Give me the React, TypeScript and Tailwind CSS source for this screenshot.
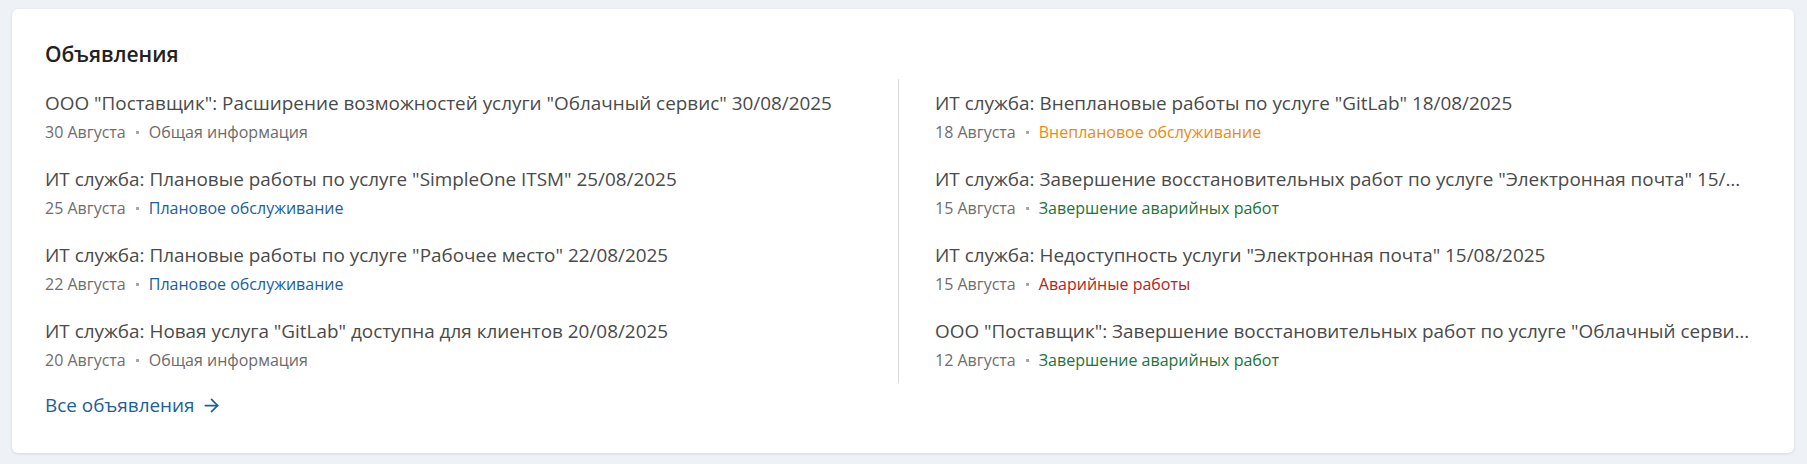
import { ArrowRight } from 'lucide-react';

type Announcement = {
  title: string;
  date: string;
  category: string;
  tone: 'gray' | 'blue' | 'orange' | 'green' | 'red';
};

const toneClass: Record<Announcement['tone'], string> = {
  gray: 'text-[#6b6b6b]',
  blue: 'text-[#1a609c]',
  orange: 'text-[#ef8a0c]',
  green: 'text-[#1c7437]',
  red: 'text-[#b3241c]',
};

const leftColumn: Announcement[] = [
  {
    title: 'ООО "Поставщик": Расширение возможностей услуги "Облачный сервис" 30/08/2025',
    date: '30 Августа',
    category: 'Общая информация',
    tone: 'gray',
  },
  {
    title: 'ИТ служба: Плановые работы по услуге "SimpleOne ITSM" 25/08/2025',
    date: '25 Августа',
    category: 'Плановое обслуживание',
    tone: 'blue',
  },
  {
    title: 'ИТ служба: Плановые работы по услуге "Рабочее место" 22/08/2025',
    date: '22 Августа',
    category: 'Плановое обслуживание',
    tone: 'blue',
  },
  {
    title: 'ИТ служба: Новая услуга "GitLab" доступна для клиентов 20/08/2025',
    date: '20 Августа',
    category: 'Общая информация',
    tone: 'gray',
  },
];

const rightColumn: Announcement[] = [
  {
    title: 'ИТ служба: Внеплановые работы по услуге "GitLab" 18/08/2025',
    date: '18 Августа',
    category: 'Внеплановое обслуживание',
    tone: 'orange',
  },
  {
    title: 'ИТ служба: Завершение восстановительных работ по услуге "Электронная почта" 15/08/2025',
    date: '15 Августа',
    category: 'Завершение аварийных работ',
    tone: 'green',
  },
  {
    title: 'ИТ служба: Недоступность услуги "Электронная почта" 15/08/2025',
    date: '15 Августа',
    category: 'Аварийные работы',
    tone: 'red',
  },
  {
    title: 'ООО "Поставщик": Завершение восстановительных работ по услуге "Облачный сервис" 12/08/2025',
    date: '12 Августа',
    category: 'Завершение аварийных работ',
    tone: 'green',
  },
];

function AnnouncementItem({ item }: { item: Announcement }) {
  return (
    <div className="py-[12px] min-w-0">
      <a href="#" className="block truncate text-[18.9px] leading-[24px] text-[#4a4a4a] hover:text-[#1a609c]">
        {item.title}
      </a>
      <div className="mt-[6px] flex items-center text-[16px] leading-[22px]">
        <span className="text-[#6e6e6e]">{item.date}</span>
        <span className="mx-[10px] h-[3px] w-[3px] bg-[#a8a8a8]" />
        <span className={toneClass[item.tone]}>{item.category}</span>
      </div>
    </div>
  );
}

export default function App() {
  return (
    <div className="min-h-[464px] bg-[#eef1f6] pl-[12px] pr-[13px] pt-[9px] pb-[13px] font-['Open_Sans',sans-serif]">
      <section className="rounded-[6px] bg-white px-[33px] pt-[31px] pb-[35px] shadow-[0_1px_3px_rgba(30,40,60,0.12)]">
        <h2 className="text-[21px] leading-[28px] font-semibold text-[#222222]">Объявления</h2>

        <div className="mt-[11px] flex">
          {/* Left column */}
          <div className="w-[823px] min-w-0 shrink-0">
            {leftColumn.map((item, i) => (
              <AnnouncementItem key={i} item={item} />
            ))}
          </div>

          {/* Right column */}
          <div className="ml-[30px] mr-[11px] min-w-0 flex-1 border-l border-[#d9dce1] pl-[36px]">
            {rightColumn.map((item, i) => (
              <AnnouncementItem key={i} item={item} />
            ))}
          </div>
        </div>

        <a href="#" className="mt-[10px] inline-flex items-center text-[18.9px] leading-[24px] text-[#1a609c]">
          Все объявления
          <ArrowRight size={21} strokeWidth={2} className="ml-[6px]" />
        </a>
      </section>
    </div>
  );
}
